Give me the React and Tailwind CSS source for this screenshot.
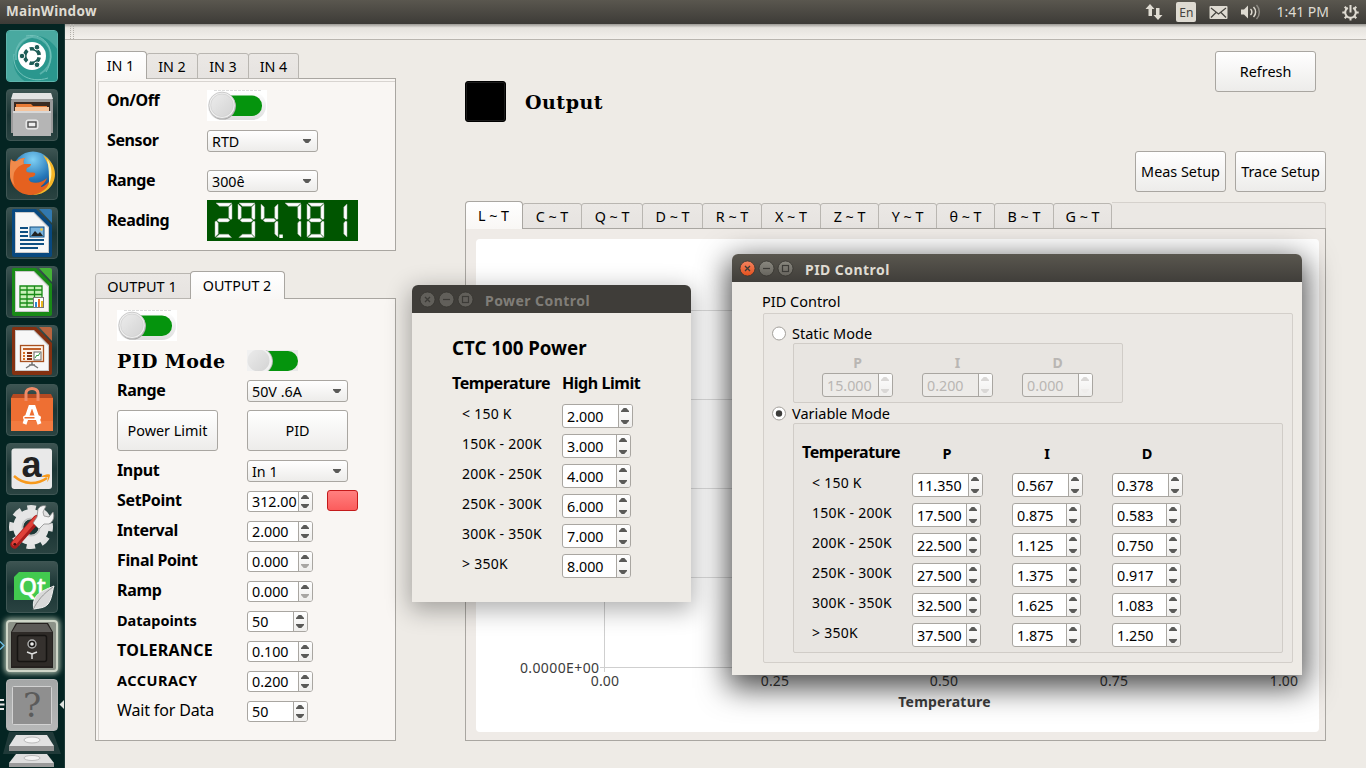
import React from "react";

const UI = "font-['Noto_Sans','Open_Sans',sans-serif]";

/* ---------- basic widgets ---------- */

function Arrow({ down, color = "#5a5a58" }) {
  return (
    <svg width="8" height="4" viewBox="0 0 8 4" className="block">
      <path d={down ? "M0 0h8v1L5.300 4H2.700L0 1z" : "M0 4h8V3L5.300 0H2.700L0 3z"} fill={color} />
    </svg>
  );
}

function Spin({ value, w = "w-[69px]", h = "h-[24px]", disabled, upColor, downColor }) {
  return (
    <div className={`flex shrink-0 ${w} ${h} overflow-hidden rounded-[3px] border border-[#a9a6a1] ${disabled ? "bg-[#edebe8]" : "bg-white"}`}>
      <div className={`flex min-w-0 flex-1 items-center overflow-hidden pt-[2px] pl-[4px] text-[14.3px] leading-none ${disabled ? "text-[#b9b6b3]" : "text-black"}`}>{value}</div>
      <div className="flex w-[14px] shrink-0 flex-col items-center justify-between border-l border-[#a9a6a1] bg-gradient-to-b from-[#fefefe] to-[#efeeec] py-[3px] pr-px">
        <Arrow color={upColor} />
        <Arrow down color={downColor} />
      </div>
    </div>
  );
}

function Select({ value, w }) {
  return (
    <div className={`mt-[10px] flex h-[22px] shrink-0 ${w} items-center justify-between rounded-[3px] border border-[#a9a6a1] bg-gradient-to-b from-white to-[#edecea] pr-[6px] pl-[4px]`}>
      <span className="pt-[2px] text-[14.3px] leading-none">{value}</span>
      <Arrow down />
    </div>
  );
}

function Button({ children, className = "" }) {
  return (
    <div className={`flex h-[41px] items-center justify-center rounded-[3px] border border-[#a9a6a1] bg-gradient-to-b from-white to-[#edecea] pt-[2px] text-[14.4px] leading-none whitespace-nowrap ${className}`}>
      {children}
    </div>
  );
}

function Toggle() {
  return (
    <svg width="60" height="31" viewBox="0 0 60 31" className="block shrink-0">
      <defs>
        <linearGradient id="knob" x1="0" y1="0" x2="1" y2="1">
          <stop offset="0" stopColor="#ececec" />
          <stop offset="1" stopColor="#d3d3d3" />
        </linearGradient>
        <linearGradient id="track" x1="0" y1="0" x2="0" y2="1">
          <stop offset="0" stopColor="#ffffff" />
          <stop offset="1" stopColor="#dedede" />
        </linearGradient>
      </defs>
      <rect width="60" height="31" fill="#fff" />
      <path d="M7 .5h47" stroke="#dcdcdc" strokeWidth="1" strokeDasharray="3 1" />
      <rect x="1" y="1.500" width="58" height="28.500" rx="14" fill="url(#track)" />
      <rect x="14" y="5.500" width="41" height="20.500" rx="10" fill="#05940d" />
      <circle cx="15.500" cy="16.200" r="13.400" fill="#a9a9a9" />
      <circle cx="15" cy="15.300" r="13.200" fill="#f0f0f0" stroke="#b9b9b9" strokeWidth=".7" />
      <circle cx="15" cy="15.300" r="11.300" fill="url(#knob)" stroke="#cfcfcf" strokeWidth=".7" />
    </svg>
  );
}

function ToggleCropped() {
  return (
    <svg width="51" height="21" viewBox="0 0 51 21" className="block shrink-0">
      <rect width="51" height="21" fill="#e9e9e9" />
      <rect x="8" y="1" width="43" height="20" rx="10" fill="#05940d" />
      <path d="M0 0h19.500a13 13 0 0 1 2 21H0z" fill="#bcbcbc" />
      <path d="M0 0h18.500a13 13 0 0 1 2 21H0z" fill="#f1f1f1" />
      <circle cx="11.500" cy="10.500" r="11" fill="url(#knob)" />
    </svg>
  );
}

/* ---------- seven-segment readout ---------- */

const SEG = {
  a: "1,0 17,0 13.5,3.2 4.5,3.2",
  b: "17,1 17,16 15.5,16.5 13.8,14.5 13.8,4",
  c: "17,18.5 17,34 13.8,31 13.8,20 15.5,18",
  d: "4.5,31.3 13.5,31.3 16.5,34.5 .8,34.5",
  e: "0,18.5 1.6,18 3.2,20 3.2,31 0,34",
  f: "0,1 3.2,4 3.2,14.5 1.6,16.5 0,16",
  g: "2,17.2 4,15.6 13,15.6 15,17.2 13,18.9 4,18.9",
};
const DIGITS = [
  [8, "abged"],
  [31, "abcdfg"],
  [54, "fgbc"],
  [77, "abc"],
  [100, "abcdefg"],
  [123, "bc"],
];

function Lcd() {
  return (
    <svg width="151" height="41" viewBox="0 0 151 41" className="block shrink-0">
      <rect width="151" height="41" fill="#005500" />
      {DIGITS.map(([x, segs]) => (
        <g key={x} transform={`translate(${x} 3)`}>
          {segs.split("").map((s) => (
            <polygon key={s} points={SEG[s]} fill="#ffffff" stroke="#a3aea3" strokeWidth=".5" />
          ))}
        </g>
      ))}
      <rect x="72.3" y="34.5" width="3.5" height="3.5" fill="#fff" />
    </svg>
  );
}

/* ---------- launcher ---------- */

function Tile({ children, tone = "bg-gradient-to-b from-[#3d5452] via-[#1a3534] to-[#2a4341] border-[#3f5654]" }) {
  return <div className={`flex h-[52px] w-[52px] shrink-0 items-center justify-center overflow-hidden rounded-[4px] border ${tone}`}>{children}</div>;
}

function Svg({ children }) {
  return (
    <svg width="52" height="52" viewBox="0 0 52 52" className="block shrink-0">
      {children}
    </svg>
  );
}

function Doc({ dark, light, children }) {
  return (
    <Svg>
      <path d="M7 2h23l16 16v30a2 2 0 0 1-2 2H8a2 2 0 0 1-2-2V3z" fill={dark} />
      <path d="M33 2h11a2 2 0 0 1 2 2v12z" fill={light} />
      <path d="M9 5h19l15 15v26H9z" fill="#c9c9c9" />
      <path d="M10 6h17.500l14.500 15v24H10z" fill="#f7f7f7" />
      {children}
    </Svg>
  );
}

function Launcher() {
  return (
    <aside className="relative flex w-[65px] shrink-0 flex-col items-center gap-[7px] overflow-hidden border-r border-[#1d3a38] bg-[#042422] pt-[6px] pr-px">
      <Tile tone="border-[#5fb5ad] bg-[#27958b]">
        <Svg>
          <rect width="52" height="52" fill="#2a978e" />
          <path d="M0 0h52v20C35-4 18 6 8 26 6 36 10 46 20 52H0z" fill="#54afa6" opacity=".75" />
          <path d="M10 30c-2-18 12-28 26-20 12 8 12 26-2 34" fill="none" stroke="#7cc6bf" strokeWidth="2" opacity=".6" />
          <path d="M20 6c20-4 32 16 20 36M42 48C24 54 6 44 8 24" fill="none" stroke="#74c2ba" strokeWidth="1" />
          <circle cx="26" cy="26" r="14" fill="#fff" />
          <circle cx="26" cy="26" r="7.300" fill="none" stroke="#1d5c56" strokeWidth="3.600" strokeDasharray="12.500 2.790" strokeDashoffset="-1.400" />
          <g fill="#1d5c56" stroke="#fff" strokeWidth="1">
            <circle cx="16" cy="26" r="2.800" />
            <circle cx="31" cy="17.200" r="2.800" />
            <circle cx="31" cy="34.800" r="2.800" />
          </g>
        </Svg>
      </Tile>
      <Tile>
        <Svg>
          <path d="M7 4h38l2 8v32H5V12z" fill="#9b9b9b" />
          <path d="M7 4h38l2 6H5z" fill="#e2e2e2" />
          <path d="M8 13h36v10H8z" fill="#3a2a22" />
          <path d="M10 15h15l2 2h14v5H10z" fill="#e87a35" />
          <path d="M9 18h34v4H9z" fill="#f5c49c" />
          <path d="M7 22h38v25H7z" fill="#b5b5b5" />
          <path d="M7 22h38v2H7z" fill="#d8d8d8" />
          <rect x="20" y="31" width="12" height="9" rx="2" fill="#d9d9d9" stroke="#efefef" />
          <rect x="22" y="33" width="8" height="5" fill="#eee" stroke="#444" strokeWidth="1.300" />
        </Svg>
      </Tile>
      <Tile>
        <Svg>
          <defs>
            <radialGradient id="globe" cx=".5" cy=".2" r=".8">
              <stop offset="0" stopColor="#7fd0f4" />
              <stop offset=".6" stopColor="#2577b8" />
              <stop offset="1" stopColor="#15447f" />
            </radialGradient>
          </defs>
          <circle cx="27" cy="24" r="20.500" fill="url(#globe)" />
          <path d="M5 11c1 2 3 3 6 2 2-2 5-3 8-3-2 2-2 4-1 6h7c0 2-2 3-4 4-1 2-1 3 0 4 3 1 5 0 8 1 1 2-1 4-4 4-3 1-3 3 0 5 5 2 12 0 16-4-2 6-7 8-6 9 5-1 9-6 12-12-3 13-12 20-22 20C13 47 4 38 4 26c0-6 0-10 1-15z" fill="#e5611f" />
          <path d="M5 11c1 2 3 3 6 2 2-2 5-3 8-3-2 2-2 4-1 6-4 1-8 4-10 9-1 5-1 9 1 13-4-4-5-8-5-12 0-6 0-10 1-15z" fill="#f08a4b" />
          <path d="M37 7c7 4 12 11 12 19 0 12-10 21-22 21 8-2 14-6 16-12 3-9 0-19-6-28z" fill="#f7b728" />
          <path d="M41 11c5 6 6 17 2 25 0-9 0-17-2-25z" fill="#fff3b0" />
        </Svg>
      </Tile>
      <Tile>
        <Doc dark="#08487f" light="#3179b0">
          <g fill="#0f4f82">
            <rect x="14" y="20" width="8" height="2" />
            <rect x="14" y="24" width="8" height="2" />
            <rect x="14" y="28" width="8" height="2" />
            <rect x="14" y="32" width="24" height="2" />
            <rect x="14" y="36" width="24" height="2" />
            <rect x="14" y="40" width="18" height="2" />
          </g>
          <rect x="24" y="20" width="14" height="10" fill="#7ab4de" stroke="#0f4f82" />
          <path d="M25 29l4-5 3 3 2-2 3 4z" fill="#222" />
          <circle cx="35.500" cy="22.500" r="1.300" fill="#f3c53a" />
        </Doc>
      </Tile>
      <Tile>
        <Doc dark="#198a17" light="#45b238">
          <rect x="14" y="20" width="22" height="21" fill="#c8f0b8" />
          <path d="M14 20h22v21H14zM14 24h22M14 28.500h22M14 33h22M14 37h22M21 20v21M28.500 20v21" stroke="#198a17" strokeWidth="1.300" fill="none" />
          <rect x="27.500" y="31.500" width="10" height="10" fill="#fff" stroke="#777" />
          <path d="M29 36h2v5h-2z" fill="#2c86d1" />
          <path d="M32 33h2v8h-2z" fill="#e66a20" />
          <path d="M35 35h2v6h-2z" fill="#e8b820" />
        </Doc>
      </Tile>
      <Tile>
        <Doc dark="#843111" light="#b8653f">
          <rect x="14.500" y="20.500" width="23" height="16" fill="#fdf2e8" stroke="#a8501f" strokeWidth="1.300" />
          <rect x="17" y="23" width="18" height="2" fill="#c0602a" />
          <path d="M17 28h2M17 31h2M17 34h2" stroke="#d66c1e" strokeWidth="2" />
          <path d="M21 28h5M21 31h5M21 34h5" stroke="#843111" strokeWidth="2" />
          <rect x="28" y="27" width="7" height="8" fill="#fff" stroke="#666" />
          <path d="M29 33l2-3 1 1 2-3" stroke="#2e9c41" fill="none" />
          <path d="M26 37v2l-6 4M26 39l6 4M23 40h6" stroke="#777" strokeWidth="1.500" fill="none" />
        </Doc>
      </Tile>
      <Tile>
        <Svg>
          <path d="M5 14h42v33H5z" fill="#ee6f33" />
          <path d="M7 10h38l2 4H5z" fill="#b54a22" />
          <path d="M5 37h42v10H5z" fill="#f37b40" />
          <path d="M20 17V9a6 4.500 0 0 1 12 0v8" fill="none" stroke="#ef8c68" strokeWidth="3" />
          <path d="M18.500 40l5.800-17h3.400l5.800 17" fill="none" stroke="#fff" strokeWidth="4" />
          <rect x="17" y="31.500" width="18" height="4.500" rx="2.200" fill="#fff" />
          <path d="M18.500 33.700h10" stroke="#ee6f33" strokeWidth="1.600" />
        </Svg>
      </Tile>
      <Tile>
        <Svg>
          <rect x="5.500" y="5.500" width="40.500" height="40.500" rx="3" fill="#e9e9e9" />
          <text x="25.500" y="33.500" textAnchor="middle" fontFamily="Liberation Sans" fontWeight="700" fontSize="36" fill="#222">a</text>
          <path d="M8 33c10 9 23 9 33 2" fill="none" stroke="#f79a1c" strokeWidth="2.500" />
          <path d="M36 33c4-2 8-2 8-1s-1 5-3 7c1-3 1-4 1-4.500-1-1-4-.5-6-.5z" fill="#f79a1c" />
        </Svg>
      </Tile>
      <Tile>
        <Svg>
          <circle cx="25" cy="25" r="19" fill="none" stroke="#e2e2e2" strokeWidth="6" strokeDasharray="8.400 6.520" strokeDashoffset="4.200" />
          <circle cx="25" cy="25" r="12.800" fill="none" stroke="#e6e6e6" strokeWidth="10" />
          <circle cx="25" cy="25" r="8.800" fill="none" stroke="#c2c2c2" strokeWidth="1.500" />
          <path d="M8.500 42.500L31 17" stroke="#a81d1d" strokeWidth="8" strokeLinecap="round" />
          <path d="M8 41.500l22-25" stroke="#e0413a" strokeWidth="4.500" strokeLinecap="round" />
          <circle cx="8.800" cy="42.300" r="1.400" fill="#3a1010" />
          <path d="M31 15l1-8c2-3 5-4 8-3l-3 6 1 4 5 1 4-5c2 5 0 10-4 12h-5l-5 5-6-6z" fill="#f3f3f3" stroke="#8d8d8d" strokeWidth=".8" />
        </Svg>
      </Tile>
      <Tile>
        <Svg>
          <path d="M13 11h31v28H8V16z" fill="#42ca4f" />
          <text x="26.500" y="33.500" textAnchor="middle" fontFamily="Noto Sans" fontWeight="500" fontSize="23" fill="#fff" stroke="#fff" strokeWidth=".5">Qt</text>
          <path d="M48 25c-7 3-16 6-19 12-2 4-2 8-1 11 5-1 11-1 14-5 4-5 4-12 6-18z" fill="#d9d9d9" stroke="#f2f2f2" />
          <path d="M27 49c4-9 10-16 20-23" stroke="#888" strokeWidth=".8" fill="none" />
        </Svg>
      </Tile>
      <Tile tone="border-[2px] border-[#cfd6c8] bg-[#8c9288] shadow-[0_0_5px_2px_rgba(220,230,210,0.7)]">
        <Svg>
          <path d="M10 3h32l5 9v36H5V12z" fill="#25211f" />
          <path d="M11 4h30l5 8H6z" fill="#5c5a57" />
          <rect x="6" y="12" width="40" height="34" fill="#2e2a27" />
          <rect x="11.500" y="15.500" width="29" height="26" rx="2" fill="#35312e" stroke="#161412" strokeWidth="1.500" />
          <circle cx="26" cy="24" r="4" fill="#1a1816" stroke="#b2b2b2" strokeWidth="1.400" />
          <circle cx="26" cy="24" r="1.800" fill="#eee" />
          <path d="M26 34v5M26 34l-5-2M26 34l5-2" stroke="#ddd" strokeWidth="1.500" />
        </Svg>
      </Tile>
      <Tile tone="border-[#b4b5b5] bg-gradient-to-b from-[#a5a7a7] to-[#b6b7b7]">
        <Svg>
          <rect x="6.500" y="7.500" width="39" height="38" rx="1" fill="#8f8f8f" stroke="#d2d2d2" />
          <text x="26" y="38" textAnchor="middle" fontFamily="DejaVu Serif" fontSize="34" fill="#5b5b5b">?</text>
        </Svg>
      </Tile>
      <svg width="58" height="36" viewBox="0 0 58 36" className="-mt-[6px] block shrink-0">
        <path d="M6 0h44l8 22H0z" fill="#2c4543" opacity=".7" />
        <path d="M13 3h31l7 11H6z" fill="#e2e2e2" />
        <ellipse cx="29" cy="8" rx="8" ry="3" fill="#f5f5f5" stroke="#bbb" />
        <path d="M6 14h45v5H6z" fill="#8f8f8f" />
        <path d="M13 22h31l7 9H6z" fill="#dedede" />
        <ellipse cx="29" cy="26" rx="8" ry="2.500" fill="#f3f3f3" stroke="#bbb" />
        <path d="M6 31h45v4H6z" fill="#9a9a9a" />
      </svg>
      <svg width="65" height="80" viewBox="0 0 65 80" className="absolute top-[610px] left-0">
        <path d="M0 7.500l4 4-4 4" fill="none" stroke="#6fc0e6" strokeWidth="1.300" />
        <path d="M0 66h4M0 70.500h4.500M0 75h4" stroke="#e8e8e8" strokeWidth="2" />
        <path d="M64 66v9l-4.500-4.500z" fill="#e0e4e0" />
      </svg>
    </aside>
  );
}

/* ---------- top bar ---------- */

function TopBar() {
  return (
    <header className="flex h-[24px] shrink-0 items-center justify-between bg-gradient-to-b from-[#5a574f] to-[#3d3b37] pr-[7px] pl-[6px] text-[#dfdbd2]">
      <span className="text-[13.5px] leading-none font-bold tracking-[0.3px]">MainWindow</span>
      <div className="flex items-center">
        <svg width="18" height="18" viewBox="0 0 18 18" className="mr-[13px]">
          <path d="M5 1l4.500 5H7v7H3.500V6H.5zM13 17l-4.500-5H11V5h3.500v7h3z" fill="#dfdbd2" />
        </svg>
        <div className="mr-[13px] flex h-[20px] w-[20px] items-center justify-center rounded-[2px] bg-[#dfdbd2] pt-px text-[12px] leading-none text-[#45433e]">En</div>
        <svg width="19" height="13" viewBox="0 0 19 13" className="mr-[13px]">
          <rect x=".5" width="18" height="13" rx="1" fill="#dfdbd2" />
          <path d="M2 2l7.500 6L17 2M2 11.500l5-5M17 11.500l-5-5" fill="none" stroke="#45433e" strokeWidth="1.200" />
        </svg>
        <svg width="20" height="16" viewBox="0 0 20 16" className="mr-[15px]">
          <path d="M0 5.500h3l4-4v13l-4-4H0z" fill="#dfdbd2" />
          <path d="M9.500 5a4 4 0 0 1 0 6M12.500 3a7 7 0 0 1 0 10" fill="none" stroke="#dfdbd2" strokeWidth="1.500" />
          <path d="M15.500 1a10 10 0 0 1 0 14" fill="none" stroke="#8d8a83" strokeWidth="1.500" />
        </svg>
        <span className="mr-[13px] text-[14px] leading-none whitespace-nowrap">1:41 PM</span>
        <svg width="17" height="17" viewBox="0 0 17 17">
          <path d="M5.800 3.800a5.300 5.300 0 1 0 5.400 0" fill="none" stroke="#dfdbd2" strokeWidth="2" />
          <path d="M8.500 1v7.500" stroke="#dfdbd2" strokeWidth="2" />
          <path d="M.3 8.500h3M13.700 8.500h3M8.500 13.500v3M2.700 2.700l2 2M14.300 2.700l-2 2M2.700 14.300l2-2M14.300 14.300l-2-2" stroke="#dfdbd2" strokeWidth="2" />
        </svg>
      </div>
    </header>
  );
}

/* ---------- tabs ---------- */

function Tab({ label, w, active }) {
  return active ? (
    <div className={`relative z-10 flex h-[28px] ${w} shrink-0 items-center justify-center rounded-t-[4px] border border-b-0 border-[#a9a6a1] bg-gradient-to-b from-white to-[#f9f7f5] pt-[2px] pr-px text-[14.300px] leading-none whitespace-nowrap`}>{label}</div>
  ) : (
    <div className={`mt-[2px] -ml-px flex h-[26px] ${w} shrink-0 items-center justify-center rounded-t-[3px] border border-[#b9b6b1] bg-gradient-to-b from-[#ebe8e5] to-[#e6e3e0] pt-[2px] text-[14.300px] leading-none whitespace-nowrap`}>{label}</div>
  );
}

/* ---------- left column ---------- */

function InRow({ label, children }) {
  return (
    <div className="flex h-[40px] items-start">
      <div className="flex h-full w-[100px] items-center pb-px text-[16px] leading-none font-bold tracking-[-0.4px]">{label}</div>
      {children}
    </div>
  );
}

function InputPanel() {
  return (
    <section>
      <div className="flex">
        <Tab label="IN 1" w="w-[52px]" active />
        <Tab label="IN 2" w="w-[52px]" />
        <Tab label="IN 3" w="w-[52px]" />
        <Tab label="IN 4" w="w-[51px]" />
      </div>
      <div className="-mt-px h-[173px] border border-[#a9a6a1] bg-[#f9f6f3] pt-[2px] pl-[2px]">
        <div className="h-full border-t border-l border-[#d8d4d0] pl-[8px]">
          <div className="-mt-[2px]">
            <InRow label="On/Off">
              <div className="mt-[10px]">
                <Toggle />
              </div>
            </InRow>
            <InRow label="Sensor"><Select value="RTD" w="w-[111px]" /></InRow>
            <InRow label="Range"><Select value="300ê" w="w-[111px]" /></InRow>
            <InRow label="Reading"><Lcd /></InRow>
          </div>
        </div>
      </div>
    </section>
  );
}

function OutRow({ label, style = "text-[16px] font-bold tracking-[-0.35px]", children }) {
  return (
    <div className="flex h-[30px] items-start">
      <div className={`flex h-full w-[130px] items-center pb-px leading-none whitespace-nowrap ${style}`}>{label}</div>
      {children}
    </div>
  );
}

const PALE = "#a8a6a3";

function OutputPanel() {
  return (
    <section className="mt-[20px]">
      <div className="flex">
        <div className="w-[95px]">
          <div className="mt-[2px] flex h-[26px] w-[96px] items-center justify-center rounded-tl-[3px] border border-[#b9b6b1] bg-gradient-to-b from-[#ebe8e5] to-[#e6e3e0] pt-px pr-[2px] text-[14.500px] leading-none">OUTPUT 1</div>
        </div>
        <Tab label="OUTPUT 2" w="w-[95px]" active />
      </div>
      <div className="-mt-px h-[443px] border border-[#a9a6a1] bg-[#f9f6f3] pt-[2px] pl-[2px]">
        <div className="h-full border-l border-[#d8d4d0] pt-[9px] pl-[18px]">
          <Toggle />
          <div className="flex h-[34px] items-start">
            <div className="flex h-[40px] w-[130px] items-center font-['DejaVu_Serif',serif] text-[19px] leading-none font-bold tracking-[0.4px] whitespace-nowrap">PID Mode</div>
            <div className="mt-[9px]">
              <ToggleCropped />
            </div>
          </div>
          <OutRow label="Range"><div className="-mt-[5px]"><Select value="50V .6A" w="w-[101px]" /></div></OutRow>
          <div className="flex h-[50px] gap-[29px] pt-[5px]">
            <Button className="w-[101px]">Power Limit</Button>
            <Button className="w-[101px]">PID</Button>
          </div>
          <OutRow label="Input"><div className="-mt-[5px]"><Select value="In 1" w="w-[101px]" /></div></OutRow>
          <OutRow label="SetPoint">
            <div className="mt-[6px]"><Spin value="312.00" w="w-[66px]" h="h-[21px]" /></div>
            <div className="mt-[5px] ml-[14px] h-[21px] w-[31px] rounded-[3px] border border-[#c41a1a] bg-gradient-to-b from-[#ff7f7f] to-[#fb5c5c]" />
          </OutRow>
          <OutRow label="Interval"><div className="mt-[6px]"><Spin value="2.000" w="w-[66px]" h="h-[21px]" /></div></OutRow>
          <OutRow label="Final Point"><div className="mt-[6px]"><Spin value="0.000" w="w-[66px]" h="h-[21px]" downColor={PALE} /></div></OutRow>
          <OutRow label="Ramp"><div className="mt-[6px]"><Spin value="0.000" w="w-[66px]" h="h-[21px]" downColor={PALE} /></div></OutRow>
          <OutRow label="Datapoints" style="pt-px text-[14.500px] font-bold"><div className="mt-[6px]"><Spin value="50" w="w-[61px]" h="h-[21px]" /></div></OutRow>
          <OutRow label="TOLERANCE" style="text-[16px] font-bold tracking-[0.3px]"><div className="mt-[6px]"><Spin value="0.100" w="w-[66px]" h="h-[21px]" /></div></OutRow>
          <OutRow label="ACCURACY" style="pt-px text-[14.500px] font-bold tracking-[0.5px]"><div className="mt-[6px]"><Spin value="0.200" w="w-[66px]" h="h-[21px]" /></div></OutRow>
          <OutRow label="Wait for Data" style="text-[16px] tracking-[-0.15px]"><div className="mt-[6px]"><Spin value="50" w="w-[61px]" h="h-[21px]" /></div></OutRow>
        </div>
      </div>
    </section>
  );
}

/* ---------- chart area ---------- */

function Chart() {
  return (
    <svg width="843" height="493" viewBox="0 0 843 493" className="block" fontFamily="Noto Sans" fontSize="14" fill="#3c3c3c">
      <rect width="843" height="493" rx="4" fill="#fff" />
      <path d="M124 71.500h684M124 160.500h684M124 249.500h684M124 338.500h684" stroke="#dcdcdc" fill="none" />
      <path d="M298.500 71v358M468.500 71v358M638.500 71v358M808.500 71v358" stroke="#dcdcdc" fill="none" />
      <path d="M128.500 71v362M124 428.500h684" stroke="#cfcfcf" fill="none" />
      <text x="123.500" y="434" textAnchor="end" letterSpacing="0.4">0.0000E+00</text>
      <text x="129" y="447" textAnchor="middle" letterSpacing="0.2">0.00</text>
      <text x="299" y="447" textAnchor="middle" letterSpacing="0.2">0.25</text>
      <text x="468" y="447" textAnchor="middle" letterSpacing="0.2">0.50</text>
      <text x="638" y="447" textAnchor="middle" letterSpacing="0.2">0.75</text>
      <text x="808" y="447" textAnchor="middle" letterSpacing="0.2">1.00</text>
      <text x="468.500" y="468" textAnchor="middle" fontWeight="700" letterSpacing="0.2">Temperature</text>
    </svg>
  );
}

function RightSide() {
  return (
    <section className="ml-[69px] flex w-[861px] flex-col pt-[11px]">
      <div className="flex h-[150px] justify-between">
        <div className="flex items-start pt-[30px]">
          <div className="h-[41px] w-[41px] rounded-[3px] border border-black bg-black shadow-[inset_0_0_0_1px_#1b1b1b]" />
          <div className="ml-[19px] flex h-[42px] items-center font-['DejaVu_Serif',serif] text-[19px] leading-none font-bold tracking-[0.5px]">Output</div>
        </div>
        <div className="flex flex-col items-end">
          <Button className="mr-[10px] w-[101px]">Refresh</Button>
          <div className="mt-[59px] flex gap-[9px]">
            <Button className="w-[91px]">Meas Setup</Button>
            <Button className="w-[91px]">Trace Setup</Button>
          </div>
        </div>
      </div>
      <div className="flex">
        <Tab label="L ~ T" w="w-[58px]" active />
        <Tab label="C ~ T" w="w-[60px]" />
        <Tab label="Q ~ T" w="w-[62px]" />
        <Tab label="D ~ T" w="w-[61px]" />
        <Tab label="R ~ T" w="w-[60px]" />
        <Tab label="X ~ T" w="w-[60px]" />
        <Tab label="Z ~ T" w="w-[59px]" />
        <Tab label="Y ~ T" w="w-[59px]" />
        <Tab label="θ ~ T" w="w-[59px]" />
        <Tab label="B ~ T" w="w-[60px]" />
        <Tab label="G ~ T" w="w-[59px]" />
        <div className="mt-px h-[27px] flex-1 rounded-tr-[3px] border-t border-r border-[#d5d1cc] bg-[#ebe8e4]" />
      </div>
      <div className="-mt-px h-[513px] border border-[#a9a6a1] bg-[#efebe7] pt-[10px] pl-[10px]">
        <Chart />
      </div>
    </section>
  );
}

/* ---------- floating windows ---------- */

function TitleButton({ kind, active }) {
  const red = kind === "close" && active;
  const ink = "#3c3b37";
  return (
    <svg width="17" height="17" viewBox="0 0 17 17" className="-mr-px block">
      <defs>
        <linearGradient id="tbRed" x1="0" y1="0" x2="0" y2="1">
          <stop offset="0" stopColor="#f58460" />
          <stop offset="1" stopColor="#e2501d" />
        </linearGradient>
        <linearGradient id="tbGray" x1="0" y1="0" x2="0" y2="1">
          <stop offset="0" stopColor="#8a8880" />
          <stop offset="1" stopColor="#66645d" />
        </linearGradient>
      </defs>
      <circle cx="8.500" cy="8.500" r="7.500" fill={red ? "url(#tbRed)" : active ? "url(#tbGray)" : "#615f5a"} stroke="#35342f" strokeWidth=".8" />
      {kind === "close" && <path d="M6 6l5 5M11 6l-5 5" stroke={ink} strokeWidth="1.300" />}
      {kind === "min" && <path d="M5 8.500h7" stroke={ink} strokeWidth="1.200" />}
      {kind === "max" && <rect x="5.500" y="5.500" width="6" height="6" fill="none" stroke={ink} strokeWidth="1.200" />}
    </svg>
  );
}

function TitleBar({ title, active }) {
  return (
    <div className={`flex h-[28px] items-center rounded-t-[6px] pt-px pl-[7px] ${active ? "bg-gradient-to-b from-[#5a574f] to-[#403e3a] text-[#dfdbd2]" : "bg-[#3f3d39] text-[#807d78]"}`}>
      <div className="flex gap-[3px]">
        <TitleButton kind="close" active={active} />
        <TitleButton kind="min" active={active} />
        <TitleButton kind="max" active={active} />
      </div>
      <span className="ml-[12px] pt-[2px] text-[14px] leading-none font-bold tracking-[0.45px] whitespace-nowrap">{title}</span>
    </div>
  );
}

const BANDS = ["< 150 K", "150K - 200K", "200K - 250K", "250K - 300K", "300K - 350K", "> 350K"];
const LIMITS = ["2.000", "3.000", "4.000", "6.000", "7.000", "8.000"];
const PID = [
  ["11.350", "0.567", "0.378"],
  ["17.500", "0.875", "0.583"],
  ["22.500", "1.125", "0.750"],
  ["27.500", "1.375", "0.917"],
  ["32.500", "1.625", "1.083"],
  ["37.500", "1.875", "1.250"],
];

function Band({ children }) {
  return <div className="flex h-[30px] w-[110px] shrink-0 items-center pb-px pl-[10px] text-[14px] leading-none tracking-[0.25px] whitespace-nowrap">{children}</div>;
}

function PowerWindow() {
  return (
    <div className="absolute top-[285px] left-[412px] h-[317px] w-[279px] rounded-t-[6px] bg-[#eeebe6] shadow-[0_6px_24px_2px_rgba(0,0,0,0.32)]">
      <TitleBar title="Power Control" />
      <div className="pt-[20px] pl-[40px]">
        <div className="flex h-[30px] items-center text-[18.700px] leading-none font-bold whitespace-nowrap">CTC 100 Power</div>
        <div className="flex h-[40px] items-center pb-px text-[16px] leading-none font-bold tracking-[-0.45px] whitespace-nowrap">
          <span className="w-[110px]">Temperature</span>
          <span>High Limit</span>
        </div>
        <div className="-mt-[4px]">
          {BANDS.map((b, i) => (
            <div key={b} className="flex h-[30px] items-start">
              <Band>{b}</Band>
              <div className="mt-[5px]">
                <Spin value={LIMITS[i]} w={i === 0 ? "w-[71px]" : "w-[69px]"} />
              </div>
            </div>
          ))}
        </div>
      </div>
    </div>
  );
}

function Radio({ on, label }) {
  return (
    <div className="flex h-[20px] items-center pl-[8px]">
      <svg width="15" height="15" viewBox="0 0 15 15" className="block">
        <circle cx="7" cy="7.500" r="6.500" fill="#fff" stroke="#a3a09b" />
        {on && <circle cx="7" cy="7.500" r="3.200" fill="#3c3c3a" />}
      </svg>
      <span className="ml-[5px] text-[14.500px] leading-none">{label}</span>
    </div>
  );
}

function PidWindow() {
  return (
    <div className="absolute top-[254px] left-[732px] h-[421px] w-[570px] rounded-t-[6px] bg-[#eeebe6] shadow-[0_9px_30px_4px_rgba(0,0,0,0.7)]">
      <TitleBar title="PID Control" active />
      <div className="pt-[9px] pl-[30px]">
        <div className="flex h-[22px] items-center pb-[2px] text-[14.500px] leading-none">PID Control</div>
        <div className="ml-px h-[350px] w-[530px] rounded-[2px] border border-[#d3cfca] bg-[#ebe8e4] pt-[9px]">
          <Radio label="Static Mode" />
          <div className="ml-[29px] h-[60px] w-[330px] rounded-[2px] border border-[#d0ccc7] bg-[#e8e5e1] pl-[28px]">
            <div className="flex h-[29px] items-end gap-[29px] pb-[3px] text-[14px] leading-none font-bold text-[#b9b6b3]">
              <span className="w-[71px] text-center">P</span>
              <span className="w-[71px] text-center">I</span>
              <span className="w-[71px] text-center">D</span>
            </div>
            <div className="flex gap-[29px]">
              <Spin disabled value="15.000" w="w-[71px]" upColor="#d9d7d5" downColor="#d9d7d5" />
              <Spin disabled value="0.200" w="w-[71px]" upColor="#d9d7d5" downColor="#d9d7d5" />
              <Spin disabled value="0.000" w="w-[71px]" upColor="#d9d7d5" downColor="#efedeb" />
            </div>
          </div>
          <Radio on label="Variable Mode" />
          <div className="ml-[29px] h-[230px] w-[490px] rounded-[2px] border border-[#d0ccc7] bg-[#e8e5e1] pt-[14px] pl-[8px]">
            <div className="flex h-[30px] items-center text-[14.500px] leading-none font-bold">
              <span className="w-[110px] pb-[2px] text-[16px] tracking-[-0.45px]">Temperature</span>
              <span className="w-[70px] text-center">P</span>
              <span className="ml-[30px] w-[70px] text-center">I</span>
              <span className="ml-[30px] w-[70px] text-center">D</span>
            </div>
            {BANDS.map((b, i) => (
              <div key={b} className="flex h-[30px] items-start">
                <Band>{b}</Band>
                {PID[i].map((v, j) => (
                  <div key={j} className="mt-[5px] w-[100px]">
                    <Spin value={v} w={i === 0 ? "w-[71px]" : "w-[69px]"} />
                  </div>
                ))}
              </div>
            ))}
          </div>
        </div>
      </div>
    </div>
  );
}

export default function App() {
  return (
    <div className={`relative flex h-[768px] w-[1366px] flex-col overflow-hidden bg-[#eeebe6] text-black ${UI}`}>
      <TopBar />
      <div className="flex min-h-0 flex-1">
        <Launcher />
        <main className="flex min-w-0 flex-1 flex-col">
          <div className="h-[16px] shrink-0 border-b border-[#b9b5af] bg-gradient-to-b from-[#9a9893] via-[#e6e3de] via-25% to-[#f3f0ec] pl-[5px]">
            <div className="h-full w-[4px] border-x border-dotted border-[#b3b0aa]" />
          </div>
          <div className="flex">
            <div className="ml-[30px] w-[301px] pt-[11px]">
              <InputPanel />
              <OutputPanel />
            </div>
            <RightSide />
          </div>
        </main>
      </div>
      <PowerWindow />
      <PidWindow />
    </div>
  );
}
